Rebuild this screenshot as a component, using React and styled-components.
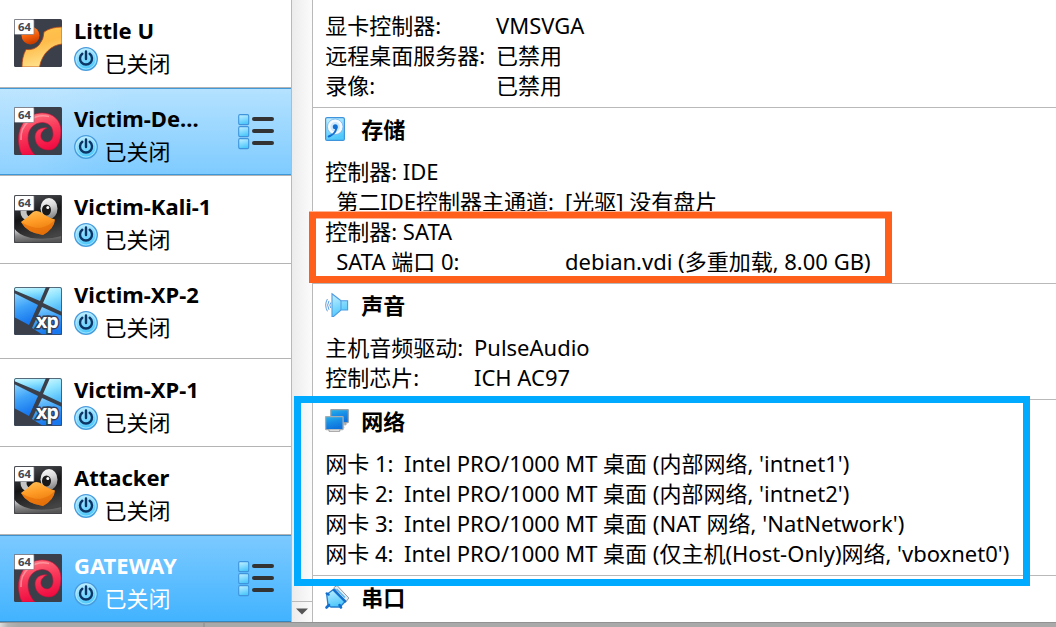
import React from 'react';
import styled, { createGlobalStyle } from 'styled-components';

const Global = createGlobalStyle`
  * { box-sizing: border-box; }
  html, body { margin: 0; padding: 0; }
  body {
    width: 1056px; height: 627px; overflow: hidden; background: #fff;
    font: 22px/30px "Noto Sans", "Noto Sans CJK SC", sans-serif; color: #000;
  }
`;

const Window = styled.div`
  position: relative; width: 1056px; height: 627px; overflow: hidden;
  display: flex; flex-direction: column;
`;
const Panes = styled.main`display: flex; height: 622px; flex: none;`;
const Desktop = styled.footer`
  display: flex; flex: 1; border-top: 1px solid #929292;
  background: linear-gradient(90deg, #dcdcdc 0, #b4b4b4 8px, #a9a9a9 18px);
`;
const DesktopEdge = styled.div`width: 205px; border-right: 2px solid #999;`;

const MachineList = styled.nav`width: 292px; flex: none; border-right: 1px solid #b9b9b9;`;
const fills = {
  none: '#fff',
  soft: 'linear-gradient(105deg, rgba(255,255,255,.12) 0 18%, rgba(255,255,255,0) 42%), linear-gradient(#b5e2ff, #7ecbff)',
  strong: 'linear-gradient(#7ccaff, #42b3ff)',
};
const Row = styled.div`
  display: flex; gap: 12px; padding-left: 14px;
  height: ${p => p.$height}px;
  color: ${p => (p.$fill === 'strong' ? '#fff' : '#000')};
  background: ${p => fills[p.$fill]};
  border-bottom: 1px solid ${p => (p.$fill === 'strong' ? '#3585bd' : '#b4b4b4')};
  box-shadow: ${p => (p.$fill === 'none' ? 'none' : p.$fill === 'soft'
    ? 'inset 0 1px #4299d5, inset 0 -1px #3c98d9' : 'inset 0 1px #3f91cc')};
`;
const OsIcon = styled.svg`width: 48px; height: 48px; flex: none; margin-top: ${p => p.$top}px;`;
const RowText = styled.div`width: 152px; padding-top: 15px;`;
const MachineName = styled.div`font-weight: 700; white-space: nowrap; height: 32px;`;
const Status = styled.div`display: flex; gap: 6.5px; height: 32px; line-height: 32px;`;
const PowerSvg = styled.svg`width: 24px; height: 24px; flex: none;`;
const DetailsSvg = styled.svg`width: 38px; height: 38px; margin-top: 25px;`;

const ScrollBar = styled.div`
  width: 21px; flex: none; display: flex; flex-direction: column; justify-content: flex-end;
  background: linear-gradient(90deg, #ececec, #fbfbfb); border-right: 1px solid #b9b9b9;
`;
const ScrollButton = styled.div`
  height: 21px; border-top: 1px solid #b9b9b9; display: flex; justify-content: center; padding-top: 6px;
`;

const Details = styled.div`flex: 1; min-width: 0;`;
const Section = styled.section`border-bottom: 1px solid #b9b9b9; padding-bottom: 7px;
  &:first-child { padding-top: 10px; }
  &:last-child { border: 0; }
`;
const Heading = styled.h2`
  margin: 0; height: 48px; padding: 6px 0 0 12px; display: flex; gap: 12.3px;
  font-size: 22px; font-weight: 700;
`;
const SectionSvg = styled.svg`width: 24px; height: 24px; flex: none; margin-top: 3px; overflow: visible;`;
const Line = styled.div`
  display: grid; grid-template-columns: ${p => p.$col}px auto; height: 30px;
  padding-left: 12.2px; white-space: pre;
`;
const Label = styled.span`padding-left: ${p => (p.$indent ? 11 : 0)}px;`;

const OrangeMark = styled.div`
  position: absolute; left: 309px; top: 212px; width: 583px; height: 71px;
  border: 7px solid #ff5f1b; border-top-width: 6px;
  box-shadow: 0 -1px #ffb493, inset 0 1px #ffb493;
`;
const BlueMark = styled.div`
  position: absolute; left: 294px; top: 396px; width: 736px; height: 190px;
  border: 7px solid #00aaff;
`;

const Badge = () => (
  <>
    <rect x="0.5" y="0.5" width="19.5" height="15" rx="1" fill="#fff" stroke="#777a82" strokeWidth=".7" />
    <text x="10.4" y="12" textAnchor="middle" fontFamily="Noto Sans" fontWeight="700" fontSize="11.3" fill="#444852">64</text>
  </>
);

const icons = {
  linux: (
    <>
      <rect width="48" height="48" rx="1.5" fill="#3a3f4a" />
      <path d="M8 48C8 42 9 36 12 30.5Q20 31.5 25 26Q30 20 30 13Q37 8 48 8V25C38 26 28 34 25.5 48Z" fill="url(#amber)" stroke="#b9481b" strokeWidth=".8" />
      <circle cx="16.5" cy="16.5" r="9" fill="url(#ball)" />
      <Badge />
    </>
  ),
  debian: (
    <>
      <rect width="48" height="48" rx="1.5" fill="#3a3f4a" />
      <path d="M8 48C3 38 4 26 7 20C12 9 21 6 28 6C39 6 47 13 47 24C47 36 42 43 35 43C26 43 21 37 21 30C21 24 26 20 33 21C28 23 26.5 27 27 30C28 34 31 35 34 35C38 34 39 30 39 27C39 19 34 15.5 28 15.5C20 16 14 22 14 31C14 38 17 44 21 48Z" fill="url(#red)" stroke="#c60f38" strokeWidth=".6" />
      <path d="M7 33C6 17 20 6 35 9.5" fill="none" stroke="#ffb4b9" strokeWidth="1.6" opacity=".6" />
      <Badge />
    </>
  ),
  tux: (
    <>
      <rect width="48" height="48" rx="1.5" fill="url(#dark)" />
      <path d="M0 33Q4 40 17 43Q34 45 48 41V48H0Z" fill="url(#silver)" />
      <ellipse cx="35" cy="13.5" rx="8.5" ry="10.5" fill="url(#eye)" />
      <ellipse cx="13.5" cy="17" rx="7" ry="8" fill="#c4c4c4" />
      <ellipse cx="32.5" cy="15" rx="4.5" ry="5.5" fill="#191919" />
      <circle cx="33.8" cy="12.5" r="1.5" fill="#fff" />
      <ellipse cx="17" cy="17" rx="4.5" ry="5" fill="#191919" />
      <path d="M7 27Q14 22 19 17Q23 14.5 28 18Q33 22 41 24.5Q40 34 29 40Q13 38 7 27Z" fill="url(#beak)" />
      <path d="M7 27Q17 33 26 33Q36 31 41 24.5Q40 34 29 40Q13 38 7 27Z" fill="#e26a08" opacity=".55" />
      <Badge />
      <rect x=".5" y=".5" width="47" height="47" rx="1.5" fill="none" stroke="#3c3f44" strokeWidth=".8" />
    </>
  ),
  xp: (
    <>
      <rect width="48" height="48" rx="1.5" fill="#3a3f4a" />
      <path d="M0 0H32L26 14L0 3Z" fill="url(#sky)" />
      <path d="M36 0H48V25L29 16Z" fill="url(#sky)" />
      <path d="M0 6L24 18L15 38L0 30Z" fill="url(#azure)" />
      <path d="M28 20L48 29V48H29L18 41Z" fill="url(#azure)" />
      <text x="33" y="41" textAnchor="middle" fontFamily="Noto Sans" fontWeight="700" fontSize="19.5" letterSpacing="-.7" fill="#fff" stroke="#333e56" strokeWidth="3" paintOrder="stroke">xp</text>
      <rect x=".5" y=".5" width="47" height="47" rx="1.5" fill="none" stroke="#3a4658" strokeWidth=".8" />
    </>
  ),
};

const Gradient = ({ id, stops }) => (
  <linearGradient id={id} x1="0" y1="0" x2=".3" y2="1">
    {stops.map((c, i) => <stop key={c} offset={i / (stops.length - 1)} stopColor={c} />)}
  </linearGradient>
);
const DefsSvg = styled.svg`position: absolute; width: 0; height: 0;`;
const Gradients = () => (
  <DefsSvg>
    <defs>
      <Gradient id="amber" stops={['#ffc850', '#ffbc4a', '#ffe08a']} />
      <Gradient id="ball" stops={['#ff9440', '#ff6a10', '#c93d00']} />
      <Gradient id="red" stops={['#ff7e86', '#f93c5c', '#f00a40']} />
      <Gradient id="dark" stops={['#565a60', '#151515', '#444']} />
      <Gradient id="silver" stops={['#e6e6e6', '#8a8a8a', '#555']} />
      <Gradient id="eye" stops={['#fff', '#d9d9d9', '#8c8c8c']} />
      <Gradient id="beak" stops={['#ffc35a', '#ff9c26', '#e8780c']} />
      <Gradient id="sky" stops={['#d5fbff', '#8ee3ff', '#54bdfb']} />
      <Gradient id="azure" stops={['#8bd6ff', '#3fa2f8', '#1878ee']} />
      <Gradient id="aqua" stops={['#c8f1ff', '#8bddff', '#4fc8fa']} />
      <Gradient id="screen" stops={['#27b4ea', '#178de6', '#0c72dc']} />
    </defs>
  </DefsSvg>
);

const Power = () => (
  <PowerSvg viewBox="0 0 24 24">
    <circle cx="12" cy="12" r="11.3" fill="url(#aqua)" stroke="#4a9bdc" strokeWidth="1.3" />
    <circle cx="12" cy="12" r="10" fill="none" stroke="#b9edff" strokeWidth="1" opacity=".7" />
    <path d="M8.3 6.8A6 6 0 1 0 15.7 6.8M12 4.4V12" fill="none" stroke="#0d3565" strokeWidth="2.4" strokeLinecap="round" />
  </PowerSvg>
);

const DetailsIcon = () => (
  <DetailsSvg viewBox="0 0 38 38">
    {[1, 13, 25].map(y => (
      <g key={y}>
        <rect x=".7" y={y + 0.6} width="10" height="10" rx="1.3" fill="url(#aqua)" stroke="#3f94dc" strokeWidth="1.1" />
        <path d={`M16 ${y + 5}H34`} stroke="#333" strokeWidth="4" strokeLinecap="round" />
      </g>
    ))}
  </DetailsSvg>
);

const sectionIcons = {
  disk: (
    <>
      <rect x=".6" y=".6" width="18.8" height="22.8" rx="1.5" fill="url(#aqua)" stroke="#3f94dc" strokeWidth="1.2" />
      <circle cx="10.2" cy="9.8" r="7.8" fill="#f4faff" stroke="#72b4ea" strokeWidth=".8" />
      <circle cx="10.2" cy="9.8" r="4.8" fill="#cfe8fb" />
      <circle cx="10.3" cy="9.8" r="2.5" fill="#126fd2" />
      <path d="M12.5 10Q12.5 15 7.5 18.5Q4 21.5 2.8 20Q2.2 18.5 5 17.8Q10 16 10.5 10Z" fill="#126fd2" />
    </>
  ),
  sound: (
    <>
      <path d="M7 .8L16 7.8H22.6V17H16L8.6 23.5H7Z" fill="url(#aqua)" stroke="#4f9be0" strokeWidth="1.1" />
      <path d="M16 8V17" stroke="#4f9be0" />
      <path d="M5.8 9.5Q3.8 12 5.8 15M4 7.8Q1.2 12 4 16.8M2.4 6Q-1 12 2.4 18.3" fill="none" stroke="#5d9ee0" strokeWidth="1" />
    </>
  ),
  network: (
    <>
      <path d="M9 17H19L20 19H10Z" fill="#ddd" />
      <rect x="5.8" y=".6" width="17.5" height="13" rx=".5" fill="url(#screen)" stroke="#96a3ad" strokeWidth="1.2" />
      <path d="M15 14.2H21V15.8H18" fill="none" stroke="#999" />
      <rect x=".6" y="7.6" width="17.5" height="13" rx=".5" fill="url(#screen)" stroke="#a3adb5" strokeWidth="1.3" />
      <path d="M4 20.7V22.3H14.8V20.7" fill="#eee" stroke="#999" />
    </>
  ),
  serial: (
    <>
      <path d="M9 2.5L12 .5L23.8 13L20.5 17.5Z" fill="#e7edf2" stroke="#8d9ba8" />
      <path d="M9 4L1.7 9.5L3 20L6 22H15L20.7 16Z" fill="url(#aqua)" stroke="#247ed0" strokeWidth="1.3" />
      <path d="M8 4.5L20.5 17" stroke="#126fcd" strokeWidth="2" />
      <path d="M4 20L1.5 22.5M14.5 20L16 22.5M1.8 8.5L3.5 9.5" stroke="#126fcd" strokeWidth="2.6" strokeLinecap="round" />
      <path d="M11.5 4L20 12.5" stroke="#5fb6f0" strokeWidth="1.5" />
    </>
  ),
};

const machines = [
  { name: 'Little U', os: 'linux', height: 88 },
  { name: 'Victim-De...', os: 'debian', height: 88, fill: 'soft' },
  { name: 'Victim-Kali-1', os: 'tux', height: 88 },
  { name: 'Victim-XP-2', os: 'xp', height: 95, top: 23 },
  { name: 'Victim-XP-1', os: 'xp', height: 88 },
  { name: 'Attacker', os: 'tux', height: 88 },
  { name: 'GATEWAY', os: 'debian', height: 87, fill: 'strong' },
];

const sections = [
  { col: 170.8, rows: [['显卡控制器:', 'VMSVGA'], ['远程桌面服务器:', '已禁用'], ['录像:', '已禁用']] },
  {
    title: '存储', icon: 'disk', col: 239.8,
    rows: [['控制器: IDE', ''], ['第二IDE控制器主通道:', '[光驱] 没有盘片', true],
      ['控制器: SATA', ''], ['SATA 端口 0:', 'debian.vdi (多重加载, 8.00 GB)', true]],
  },
  { title: '声音', icon: 'sound', col: 148.8, rows: [['主机音频驱动:', 'PulseAudio'], ['控制芯片:', 'ICH AC97']] },
  {
    title: '网络', icon: 'network', col: 78.8,
    rows: [['网卡 1:', "Intel PRO/1000 MT 桌面 (内部网络, 'intnet1')"],
      ['网卡 2:', "Intel PRO/1000 MT 桌面 (内部网络, 'intnet2')"],
      ['网卡 3:', "Intel PRO/1000 MT 桌面 (NAT 网络, 'NatNetwork')"],
      ['网卡 4:', "Intel PRO/1000 MT 桌面 (仅主机(Host-Only)网络, 'vboxnet0')"]],
  },
  { title: '串口', icon: 'serial', col: 0, rows: [] },
];

export default function App() {
  return (
    <Window>
      <Global />
      <Gradients />
      <Panes>
        <MachineList>
          {machines.map(m => (
            <Row key={m.name} $height={m.height} $fill={m.fill || 'none'}>
              <OsIcon viewBox="0 0 48 48" $top={m.top || 19}>{icons[m.os]}</OsIcon>
              <RowText>
                <MachineName>{m.name}</MachineName>
                <Status><Power />已关闭</Status>
              </RowText>
              {m.fill && <DetailsIcon />}
            </Row>
          ))}
        </MachineList>
        <ScrollBar>
          <ScrollButton>
            <svg width="12" height="7" viewBox="0 0 12 7"><path d="M0 .5H12L6 6.5Z" fill="#555" /></svg>
          </ScrollButton>
        </ScrollBar>
        <Details>
          {sections.map(s => (
            <Section key={s.title || 'display'}>
              {s.title && (
                <Heading>
                  <SectionSvg viewBox="0 0 24 24">{sectionIcons[s.icon]}</SectionSvg>
                  {s.title}
                </Heading>
              )}
              {s.rows.map(([label, value, indent]) => (
                <Line key={label} $col={s.col}>
                  <Label $indent={indent}>{label}</Label>
                  <span>{value}</span>
                </Line>
              ))}
            </Section>
          ))}
        </Details>
      </Panes>
      <Desktop><DesktopEdge /></Desktop>
      <OrangeMark />
      <BlueMark />
    </Window>
  );
}
